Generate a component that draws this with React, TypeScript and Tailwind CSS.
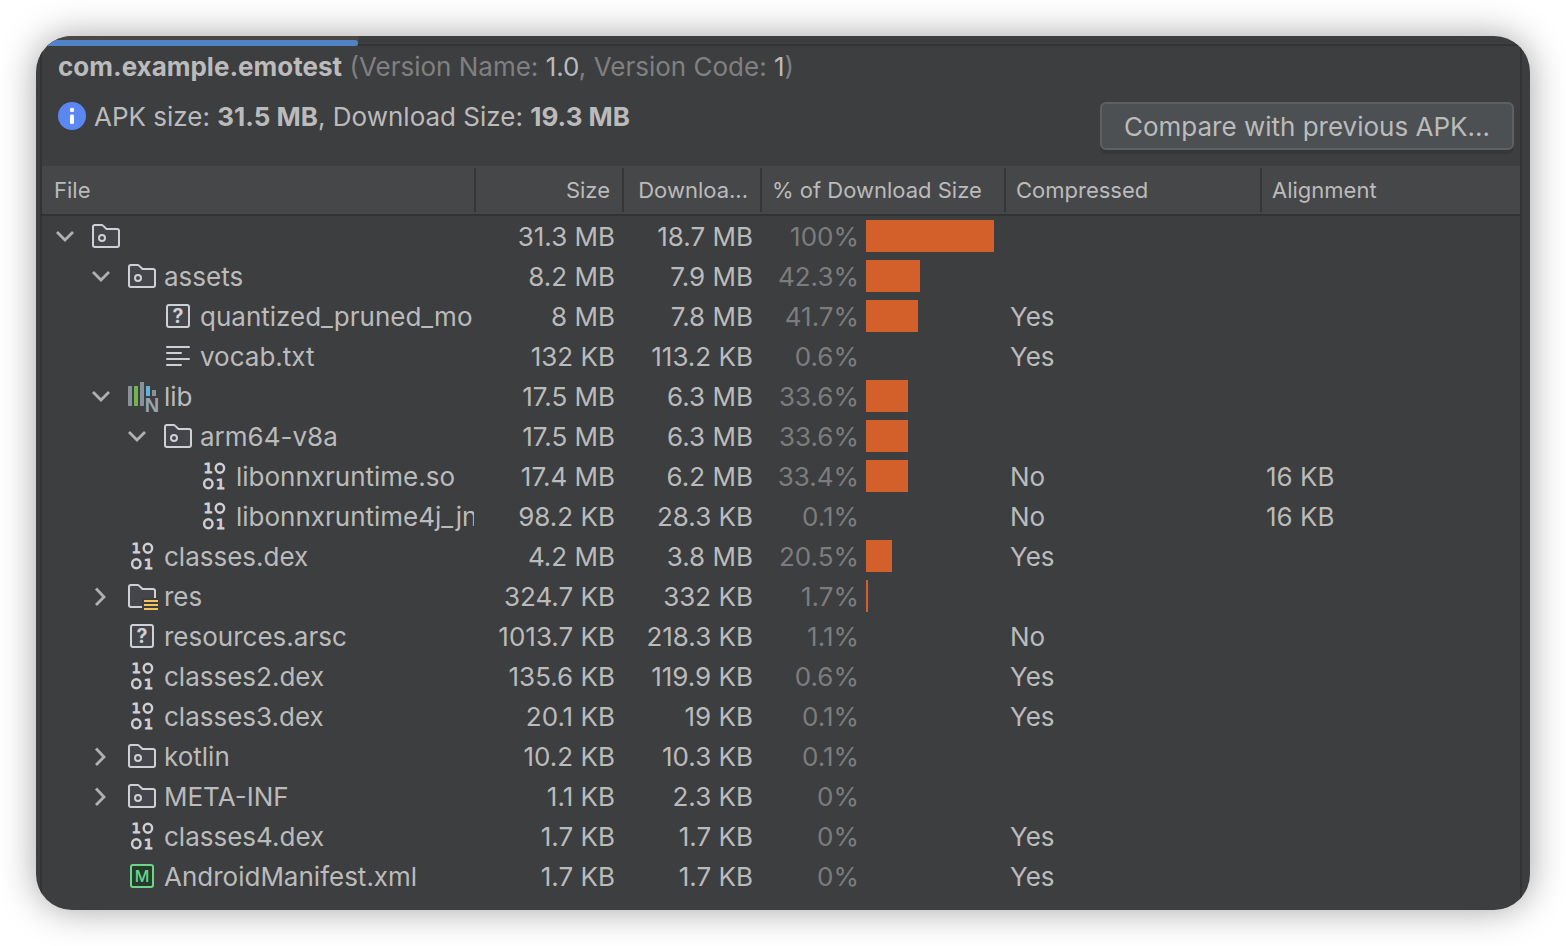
import React from "react";

type IconKind =
  | "package"
  | "unknown"
  | "text"
  | "native"
  | "binary"
  | "resources"
  | "manifest";

interface Entry {
  name: string;
  level: number;
  icon: IconKind;
  state?: "open" | "closed";
  size: string;
  download: string;
  percent: string;
  bar: number;
  compressed?: string;
  alignment?: string;
}

const entries: Entry[] = [
  { name: "", level: 0, icon: "package", state: "open", size: "31.3 MB", download: "18.7 MB", percent: "100%", bar: 128 },
  { name: "assets", level: 1, icon: "package", state: "open", size: "8.2 MB", download: "7.9 MB", percent: "42.3%", bar: 54 },
  { name: "quantized_pruned_mo", level: 2, icon: "unknown", size: "8 MB", download: "7.8 MB", percent: "41.7%", bar: 52, compressed: "Yes" },
  { name: "vocab.txt", level: 2, icon: "text", size: "132 KB", download: "113.2 KB", percent: "0.6%", bar: 0, compressed: "Yes" },
  { name: "lib", level: 1, icon: "native", state: "open", size: "17.5 MB", download: "6.3 MB", percent: "33.6%", bar: 42 },
  { name: "arm64-v8a", level: 2, icon: "package", state: "open", size: "17.5 MB", download: "6.3 MB", percent: "33.6%", bar: 42 },
  { name: "libonnxruntime.so", level: 3, icon: "binary", size: "17.4 MB", download: "6.2 MB", percent: "33.4%", bar: 42, compressed: "No", alignment: "16 KB" },
  { name: "libonnxruntime4j_jn", level: 3, icon: "binary", size: "98.2 KB", download: "28.3 KB", percent: "0.1%", bar: 0, compressed: "No", alignment: "16 KB" },
  { name: "classes.dex", level: 1, icon: "binary", size: "4.2 MB", download: "3.8 MB", percent: "20.5%", bar: 26, compressed: "Yes" },
  { name: "res", level: 1, icon: "resources", state: "closed", size: "324.7 KB", download: "332 KB", percent: "1.7%", bar: 2 },
  { name: "resources.arsc", level: 1, icon: "unknown", size: "1013.7 KB", download: "218.3 KB", percent: "1.1%", bar: 0, compressed: "No" },
  { name: "classes2.dex", level: 1, icon: "binary", size: "135.6 KB", download: "119.9 KB", percent: "0.6%", bar: 0, compressed: "Yes" },
  { name: "classes3.dex", level: 1, icon: "binary", size: "20.1 KB", download: "19 KB", percent: "0.1%", bar: 0, compressed: "Yes" },
  { name: "kotlin", level: 1, icon: "package", state: "closed", size: "10.2 KB", download: "10.3 KB", percent: "0.1%", bar: 0 },
  { name: "META-INF", level: 1, icon: "package", state: "closed", size: "1.1 KB", download: "2.3 KB", percent: "0%", bar: 0 },
  { name: "classes4.dex", level: 1, icon: "binary", size: "1.7 KB", download: "1.7 KB", percent: "0%", bar: 0, compressed: "Yes" },
  { name: "AndroidManifest.xml", level: 1, icon: "manifest", size: "1.7 KB", download: "1.7 KB", percent: "0%", bar: 0, compressed: "Yes" },
];

const indents = ["pl-2", "pl-11", "pl-20", "pl-29"];

const folderPath =
  "M8.25 4.5H13.5C14.05 4.5 14.5 4.95 14.5 5.5V12.5C14.5 13.05 14.05 13.5 13.5 13.5H2.5C1.95 13.5 1.5 13.05 1.5 12.5V3.5C1.5 2.95 1.95 2.5 2.5 2.5H5.8C6.07 2.5 6.32 2.61 6.5 2.8L8.25 4.5Z";

function IconShape({ kind }: { kind: IconKind }) {
  switch (kind) {
    case "package":
      return (
        <>
          <path d={folderPath} fill="#43454a" stroke="#ced0d6" />
          <circle cx="6" cy="9" r="1.5" fill="none" stroke="#ced0d6" />
        </>
      );
    case "resources":
      return (
        <>
          <path d={folderPath} fill="#43454a" stroke="#ced0d6" />
          <path d="M8 9H16V16H8Z" fill="#3d3e40" />
          <path d="M9 10.5H16M9 12.5H16M9 14.5H16" stroke="#f2c55c" />
        </>
      );
    case "unknown":
      return (
        <>
          <rect x="2.5" y="2.5" width="11" height="11" rx="1" fill="#43454a" stroke="#ced0d6" />
          <text x="8" y="11.4" textAnchor="middle" fontSize="9.8" fontWeight="700" fill="#ced0d6">?</text>
        </>
      );
    case "text":
      return <path d="M2.5 3.5H13.5M2.5 6.5H9.5M2.5 9.5H13.5M2.5 12.5H9.5" stroke="#ced0d6" strokeLinecap="round" />;
    case "native":
      return (
        <>
          <path d="M1 3H3V13H1ZM7 1H9V13H7ZM13 5H15V8H13Z" fill="#87929a" />
          <path d="M4 3H6V13H4Z" fill="#70b44b" />
          <path d="M10 3H12V8H10Z" fill="#5fb4de" />
          <text x="9.4" y="16" fontSize="10" fontWeight="700" fill="#98a5ae" className="font-['Liberation_Sans',sans-serif]">N</text>
        </>
      );
    case "binary":
      return (
        <>
          <g stroke="#ced0d6" strokeWidth="1.2">
            <ellipse cx="10.95" cy="4.15" rx="2.1" ry="2.25" />
            <ellipse cx="5.15" cy="11.9" rx="2.1" ry="2.25" />
          </g>
          <g fill="#ced0d6" stroke="#ced0d6" strokeWidth="0.5" fontSize="7.4" textAnchor="middle" className="font-['DejaVu_Sans',sans-serif]">
            <text x="5.1" y="6.7">1</text>
            <text x="11.2" y="14.5">1</text>
          </g>
        </>
      );
    case "manifest":
      return (
        <>
          <rect x="2.5" y="2.5" width="11" height="11" rx="1" fill="#253b2c" stroke="#6cd58a" />
          <text x="8" y="10.9" textAnchor="middle" fontSize="8" fontWeight="500" fill="#6cd58a">M</text>
        </>
      );
  }
}

function FileIcon({ kind }: { kind: IconKind }) {
  return (
    <svg viewBox="0 0 16 16" fill="none" aria-hidden="true" className="size-8 shrink-0 overflow-visible">
      <IconShape kind={kind} />
    </svg>
  );
}

function Toggle({ state, name }: { state?: "open" | "closed"; name: string }) {
  if (!state) return <span className="w-[30px] shrink-0" />;
  return (
    <button
      type="button"
      aria-expanded={state === "open"}
      aria-label={name || "root"}
      className="flex w-[30px] shrink-0 items-center justify-center"
    >
      <svg viewBox="0 0 30 32" fill="none" stroke="#afb1b3" strokeWidth="2.8" aria-hidden="true" className="h-8 w-[30px]">
        <path d={state === "open" ? "M7 12L15 20L23 12" : "M10 8.5L18 17L10 25"} />
      </svg>
    </button>
  );
}

function Separator() {
  return <span className="absolute top-0.5 right-0 h-11 w-0.5 bg-[#353638]" />;
}

export default function App() {
  return (
    <div className="flex min-h-screen bg-white p-9 font-['Inter','Liberation_Sans',sans-serif] text-[26px] text-[#bbbbbb]">
      <main className="flex min-w-0 flex-1 flex-col overflow-hidden rounded-[36px] bg-[#3d3e40] shadow-[0_0_36px_rgba(0,0,0,0.36)]">
        <div className="relative h-2.5 shrink-0 border-b-2 border-[#323335]">
          <div className="absolute top-0 left-0 flex h-2.5 w-[322px] flex-col bg-[#4c4740] pt-1">
            <div className="h-1.5 rounded-r-full bg-[#4f83c6]" />
          </div>
        </div>
        <div className="mr-2 ml-1 flex-1 border-x-2 border-[#323335]">
          <header className="flex h-[120px] items-end justify-between pr-1.5 pl-4">
            <div className="flex flex-col gap-2 self-start leading-[42px] whitespace-nowrap">
              <h1 className="text-[#808080]">
                <b className="text-[#bbbbbb]">com.example.emotest</b> (Version Name: <span className="text-[#bbbbbb]">1.0</span>, Version Code:{" "}
                <span className="text-[#bbbbbb]">1</span>)
              </h1>
              <p className="flex items-start gap-2">
                <svg viewBox="0 0 28 28" aria-hidden="true" className="mt-1.5 size-7">
                  <circle cx="14" cy="14" r="14" fill="#5b87f2" />
                  <circle cx="14" cy="8" r="2.2" fill="#fff" />
                  <rect x="12" y="12.5" width="4" height="9.5" rx="1.6" fill="#fff" />
                </svg>
                <span>
                  APK size: <b>31.5 MB</b>, Download Size: <b>19.3 MB</b>
                </span>
              </p>
            </div>
            <button
              type="button"
              className="mb-4 flex h-12 items-center rounded-md border-2 border-[#5e6062] bg-[#4c5052] px-[22px] whitespace-nowrap shadow-[0_4px_0_rgba(0,0,0,0.1)]"
            >
              Compare with previous APK...
            </button>
          </header>
          <table className="w-full table-fixed border-collapse">
            <colgroup>
              <col className="w-[434px]" />
              <col className="w-[148px]" />
              <col className="w-[138px]" />
              <col className="w-[244px]" />
              <col className="w-[256px]" />
              <col />
            </colgroup>
            <thead>
              <tr className="h-[50px] bg-[#464749] text-left text-[22px] whitespace-nowrap shadow-[inset_0_-2px_0_#323335]">
                <th className="relative p-0 pb-0.5 pl-3 font-normal">File<Separator /></th>
                <th className="relative p-0 pr-3.5 pb-0.5 text-right font-normal">Size<Separator /></th>
                <th className="relative p-0 pr-3.5 pb-0.5 text-right font-normal">Downloa...<Separator /></th>
                <th className="relative p-0 pb-0.5 pl-2.5 font-normal">% of Download Size<Separator /></th>
                <th className="relative p-0 pb-0.5 pl-2.5 font-normal">Compressed<Separator /></th>
                <th className="p-0 pb-0.5 pl-2.5 font-normal">Alignment</th>
              </tr>
            </thead>
            <tbody>
              {entries.map((e, i) => (
                <tr key={i} className="h-10 leading-[38px] whitespace-nowrap">
                  <td className="p-0 pr-0.5">
                    <div className={`flex h-10 items-center overflow-hidden ${indents[e.level]}`}>
                      <Toggle state={e.state} name={e.name} />
                      <span className="ml-2.5 flex items-center gap-1.5">
                        <FileIcon kind={e.icon} />
                        <span className="pt-0.5">{e.name}</span>
                      </span>
                    </div>
                  </td>
                  <td className="p-0 pt-0.5 pr-[9px] text-right">{e.size}</td>
                  <td className="p-0 pt-0.5 pr-[9px] text-right">{e.download}</td>
                  <td className="p-0">
                    <div className="flex items-center gap-[7px]">
                      <span className="w-[97px] pt-0.5 text-right text-[#7c7c7c]">{e.percent}</span>
                      <span className="h-8 bg-[#d35f2b]" style={{ width: e.bar }} />
                    </div>
                  </td>
                  <td className="p-0 pt-0.5 pl-1">{e.compressed}</td>
                  <td className="p-0 pt-0.5 pl-1">{e.alignment}</td>
                </tr>
              ))}
            </tbody>
          </table>
        </div>
      </main>
    </div>
  );
}
